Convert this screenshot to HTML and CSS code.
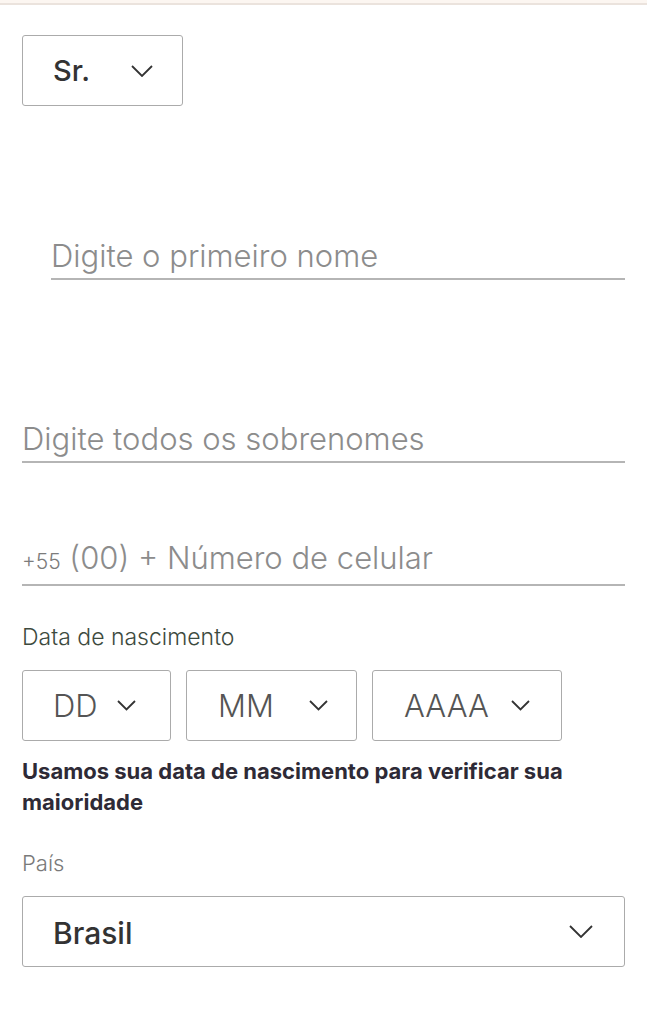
FILE: index.html
```
<!DOCTYPE html>
<html lang="pt-BR">
<head>
<meta charset="utf-8">
<title>Cadastro</title>
<link rel="stylesheet" href="styles.css">
</head>
<body>
<div class="topbar"></div>
<main class="form">
  <div class="select select-title">
    <span class="select-value">Sr.</span>
    <svg class="chev" width="22" height="12" viewBox="0 0 22 12"><path d="M1 1 L11 11 L21 1" fill="none" stroke="#333" stroke-width="1.8"/></svg>
  </div>

  <div class="field field-first"><span class="ph">Digite o primeiro nome</span></div>
  <div class="field field-last"><span class="ph">Digite todos os sobrenomes</span></div>
  <div class="field field-phone"><span class="ph"><span class="ph-small">+55</span> (00) + Número de celular</span></div>

  <div class="label label-date">Data de nascimento</div>
  <div class="date-row">
    <div class="select date dd"><span class="date-value">DD</span><svg class="chev-sm" width="19" height="11" viewBox="0 0 19 11"><path d="M1 1 L9.5 9.5 L18 1" fill="none" stroke="#333" stroke-width="1.8"/></svg></div>
    <div class="select date mm"><span class="date-value">MM</span><svg class="chev-sm" width="19" height="11" viewBox="0 0 19 11"><path d="M1 1 L9.5 9.5 L18 1" fill="none" stroke="#333" stroke-width="1.8"/></svg></div>
    <div class="select date yyyy"><span class="date-value">AAAA</span><svg class="chev-sm" width="19" height="11" viewBox="0 0 19 11"><path d="M1 1 L9.5 9.5 L18 1" fill="none" stroke="#333" stroke-width="1.8"/></svg></div>
  </div>
  <p class="note">Usamos sua data de nascimento para verificar sua maioridade</p>

  <div class="label label-country">País</div>
  <div class="select select-country">
    <span class="select-value">Brasil</span>
    <svg class="chev" width="24" height="13" viewBox="0 0 24 13"><path d="M1 1 L12 12 L23 1" fill="none" stroke="#333" stroke-width="1.8"/></svg>
  </div>
</main>
</body>
</html>
```
FILE: styles.css
```
* { box-sizing: border-box; }
html, body { margin: 0; padding: 0; background: #fff; }
body { font-family: Inter, Roboto, sans-serif; color: #333; }

.topbar {
  height: 5px;
  background: #fcf6f1;
  border-bottom: 2px solid #ebe3dd;
}

.form {
  padding: 0 22px;
  display: flex;
  flex-direction: column;
  align-items: stretch;
}

.select {
  border: 1.5px solid #ababab;
  border-radius: 3px;
  height: 71px;
  display: flex;
  align-items: center;
  background: #fff;
}

.select-title {
  margin-top: 30px;
  width: 161px;
  padding: 0 29px 0 30px;
  justify-content: space-between;
}

.select-value {
  font-size: 29px;
  font-weight: 500;
  color: #333;
  line-height: 36px;
}
.select-country .select-value { font-size: 30px; padding-top: 3px; }

.field {
  height: 46px;
  border-bottom: 2px solid #b5b5b5;
  display: flex;
  align-items: flex-end;
  padding-bottom: 6px;
}
.field-first { margin-top: 128px; margin-left: 29px; }
.field-last { margin-top: 137px; }
.field-phone { margin-top: 77px; }

.ph {
  font-size: 31px;
  font-weight: 300;
  color: #8c8c8c;
  line-height: 32px;
}
.ph-small { font-size: 21px; color: #7c7c7c; }

.label {
  font-weight: 300;
  line-height: 24px;
}
.label-date { margin-top: 39px; color: #3d4a3e; font-size: 23px; }
.label-country { margin-top: 33px; color: #7a7a7a; font-size: 22px; }

.date-row {
  margin-top: 21px;
  display: flex;
  gap: 15px;
}
.date {
  padding: 0 0 0 30px;
}
.dd { width: 149px; gap: 19px; }
.mm { width: 171px; gap: 35px; padding-left: 31px; }
.yyyy { width: 190px; gap: 22px; padding-left: 31px; }

.date-value {
  font-size: 31px;
  font-weight: 300;
  color: #555;
  line-height: 36px;
}

.note {
  margin: 15px 0 0;
  font-size: 22px;
  font-weight: 700;
  line-height: 31px;
  color: #2e2a36;
  max-width: 580px;
}

.select-country {
  margin-top: 21px;
  padding: 0 31px 0 30px;
  justify-content: space-between;
}
```
